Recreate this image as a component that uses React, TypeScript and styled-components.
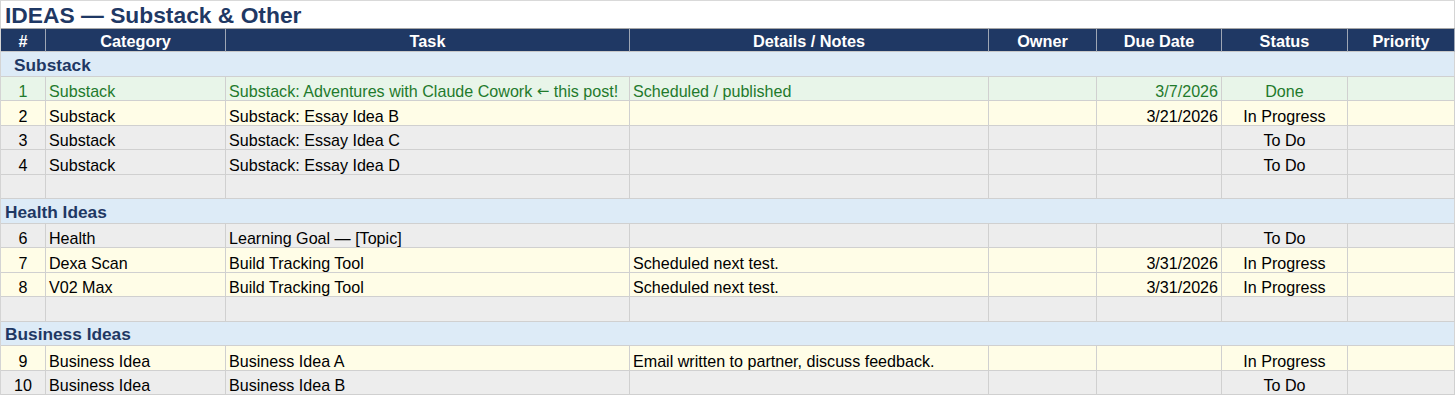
import styled, { createGlobalStyle } from "styled-components";
import { Fragment } from "react";

type Tone = "done" | "progress" | "todo" | "blank";

interface Task {
  id: string;
  category: string;
  task: string;
  notes: string;
  owner: string;
  due: string;
  status: string;
  priority: string;
  tone: Tone;
}

interface Section {
  title: string;
  indent?: boolean;
  rows: Task[];
}

const blank: Task = {
  id: "",
  category: "",
  task: "",
  notes: "",
  owner: "",
  due: "",
  status: "",
  priority: "",
  tone: "blank",
};

const sections: Section[] = [
  {
    title: "Substack",
    indent: true,
    rows: [
      {
        ...blank,
        id: "1",
        category: "Substack",
        task: "Substack: Adventures with Claude Cowork ← this post!",
        notes: "Scheduled / published",
        due: "3/7/2026",
        status: "Done",
        tone: "done",
      },
      { ...blank, id: "2", category: "Substack", task: "Substack: Essay Idea B", due: "3/21/2026", status: "In Progress", tone: "progress" },
      { ...blank, id: "3", category: "Substack", task: "Substack: Essay Idea C", status: "To Do", tone: "todo" },
      { ...blank, id: "4", category: "Substack", task: "Substack: Essay Idea D", status: "To Do", tone: "todo" },
      blank,
    ],
  },
  {
    title: "Health Ideas",
    rows: [
      { ...blank, id: "6", category: "Health", task: "Learning Goal — [Topic]", status: "To Do", tone: "todo" },
      { ...blank, id: "7", category: "Dexa Scan", task: "Build Tracking Tool", notes: "Scheduled next test.", due: "3/31/2026", status: "In Progress", tone: "progress" },
      { ...blank, id: "8", category: "V02 Max", task: "Build Tracking Tool", notes: "Scheduled next test.", due: "3/31/2026", status: "In Progress", tone: "progress" },
      blank,
    ],
  },
  {
    title: "Business Ideas",
    rows: [
      { ...blank, id: "9", category: "Business Idea", task: "Business Idea A", notes: "Email written to partner, discuss feedback.", status: "In Progress", tone: "progress" },
      { ...blank, id: "10", category: "Business Idea", task: "Business Idea B", status: "To Do", tone: "todo" },
    ],
  },
];

const columns = ["#", "Category", "Task", "Details / Notes", "Owner", "Due Date", "Status", "Priority"];

const toneBg: Record<Tone, string> = {
  done: "#e8f5e9",
  progress: "#fffde7",
  todo: "#ededed",
  blank: "#ededed",
};

// the arrow glyph is drawn in a wider font, like the sheet shows it
function TaskText({ text }: { text: string }) {
  const parts = text.split("←");
  if (parts.length < 2) return <>{text}</>;
  return (
    <>
      {parts[0]}
      <Arrow>←</Arrow>
      {parts[1]}
    </>
  );
}

export default function App() {
  return (
    <>
      <GlobalStyle />
      <Sheet>
        <Title>IDEAS — Substack &amp; Other</Title>
        <Grid>
          {columns.map((c) => (
            <HeadCell key={c}>{c}</HeadCell>
          ))}
          {sections.map((s) => (
            <Fragment key={s.title}>
              <SectionRow $indent={!!s.indent}>{s.title}</SectionRow>
              {s.rows.map((r, i) => (
                <Row key={i} $tone={r.tone}>
                  <Cell $align="center">{r.id}</Cell>
                  <Cell>{r.category}</Cell>
                  <Cell>
                    <TaskText text={r.task} />
                  </Cell>
                  <Cell>{r.notes}</Cell>
                  <Cell>{r.owner}</Cell>
                  <Cell $align="right">{r.due}</Cell>
                  <Cell $align="center">{r.status}</Cell>
                  <Cell>{r.priority}</Cell>
                </Row>
              ))}
            </Fragment>
          ))}
        </Grid>
      </Sheet>
    </>
  );
}

const GlobalStyle = createGlobalStyle`
  body {
    margin: 0;
    background: #ffffff;
    font-family: "Liberation Sans", Arial, sans-serif;
  }
`;

const Sheet = styled.div`
  width: 1455px;
  box-sizing: border-box;
  border-top: 1px solid #d9d9d9;
  border-left: 1px solid #d4d4d4;
  background: #ffffff;
`;

const Title = styled.h1`
  margin: 0;
  height: 27px;
  box-sizing: border-box;
  display: flex;
  align-items: flex-end;
  padding: 0 0 1px 4px;
  font-size: 22.8px;
  line-height: 24px;
  font-weight: bold;
  color: #1f3864;
  border-right: 1px solid #d4d4d4;
`;

const Grid = styled.div`
  display: grid;
  grid-template-columns: 45px 180px 404px 359px 108px 125px 126px 107px;
  grid-auto-rows: 24.47px;
`;

const HeadCell = styled.div`
  box-sizing: border-box;
  display: flex;
  align-items: flex-end;
  justify-content: center;
  padding-bottom: 1px;
  background: #1f3864;
  color: #ffffff;
  font-size: 16.3px;
  line-height: 17px;
  font-weight: bold;
  border-top: 1px solid #a6a6a6;
  border-right: 1px solid #9ea6b4;
  border-bottom: 1px solid #c8c8c8;
`;

const SectionRow = styled.div<{ $indent: boolean }>`
  grid-column: 1 / -1;
  box-sizing: border-box;
  display: flex;
  align-items: flex-end;
  padding: 0 0 1px ${(p) => (p.$indent ? "13px" : "4px")};
  background: #ddebf7;
  color: #1f3864;
  font-size: 17.3px;
  line-height: 19px;
  font-weight: bold;
  border-right: 1px solid #d4d4d4;
  border-bottom: 1px solid #d0d0d0;
`;

const Row = styled.div<{ $tone: Tone }>`
  display: contents;
  color: ${(p) => (p.$tone === "done" ? "#1f7a2c" : "#000000")};

  & > div {
    background: ${(p) => toneBg[p.$tone]};
  }
`;

const Cell = styled.div<{ $align?: "left" | "center" | "right" }>`
  box-sizing: border-box;
  display: flex;
  align-items: flex-end;
  justify-content: ${(p) =>
    p.$align === "center" ? "center" : p.$align === "right" ? "flex-end" : "flex-start"};
  padding: 0 3px 1px;
  font-size: 16.1px;
  line-height: 16px;
  white-space: pre;
  overflow: hidden;
  border-right: 1px solid #d0d0d0;
  border-bottom: 1px solid #d0d0d0;
`;

const Arrow = styled.span`
  font-family: "DejaVu Sans", sans-serif;
  font-size: 15px;
`;
